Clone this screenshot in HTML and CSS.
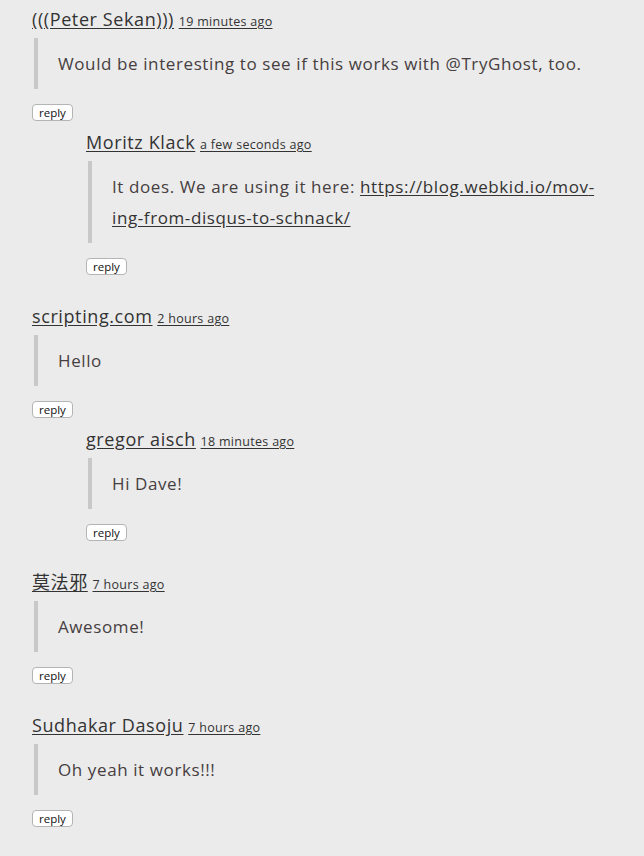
FILE: index.html
```html
<!DOCTYPE html>
<html lang="en">
<head>
<meta charset="utf-8">
<title>Comments</title>
<link rel="stylesheet" href="styles.css">
</head>
<body>
<ul class="comments">
  <li class="comment">
    <div class="meta"><a class="author" href="#">(((Peter Sekan)))</a> <a class="date" href="#">19 minutes ago</a></div>
    <blockquote class="body">Would be interesting to see if this works with @TryGhost, too.</blockquote>
    <button class="reply">reply</button>
    <ul class="replies">
      <li class="comment">
        <div class="meta"><a class="author" href="#">Moritz Klack</a> <a class="date" href="#">a few seconds ago</a></div>
        <blockquote class="body">It does. We are using it here: <a class="link" href="#">https://blog.webkid.io/mov&shy;ing-from-disqus-to-schnack/</a></blockquote>
        <button class="reply">reply</button>
      </li>
    </ul>
  </li>
  <li class="comment">
    <div class="meta"><a class="author" href="#">scripting.com</a> <a class="date" href="#">2 hours ago</a></div>
    <blockquote class="body">Hello</blockquote>
    <button class="reply">reply</button>
    <ul class="replies">
      <li class="comment">
        <div class="meta"><a class="author" href="#">gregor aisch</a> <a class="date" href="#">18 minutes ago</a></div>
        <blockquote class="body">Hi Dave!</blockquote>
        <button class="reply">reply</button>
      </li>
    </ul>
  </li>
  <li class="comment">
    <div class="meta"><a class="author" href="#">莫法邪</a> <a class="date" href="#">7 hours ago</a></div>
    <blockquote class="body">Awesome!</blockquote>
    <button class="reply">reply</button>
  </li>
  <li class="comment">
    <div class="meta"><a class="author" href="#">Sudhakar Dasoju</a> <a class="date" href="#">7 hours ago</a></div>
    <blockquote class="body">Oh yeah it works!!!</blockquote>
    <button class="reply">reply</button>
  </li>
</ul>
</body>
</html>
```
FILE: styles.css
```css
html, body {
  margin: 0;
  padding: 0;
  background: #ebebeb;
}
body {
  font-family: "Open Sans", "Noto Sans", "Noto Sans CJK SC", sans-serif;
  color: #333;
  padding: 6px 12px 0 32px;
}
.comments, .replies {
  list-style: none;
  margin: 0;
  padding: 0;
}
.comments > .comment {
  margin-bottom: 28px;
}
.replies {
  margin-top: 8px;
  padding-left: 54px;
}
.replies > .comment {
  margin-bottom: 3px;
}
.meta {
  font-size: 18px;
  line-height: 26px;
  height: 26px;
  white-space: nowrap;
}
.author, .date, .link {
  color: #333;
  text-decoration: underline;
  text-underline-offset: 2px;
}
.author {
  letter-spacing: 0.6px;
}
.date {
  font-size: 12.5px;
  letter-spacing: 0.3px;
}
.body {
  margin: 6px 0 0 2px;
  padding: 10px 20px;
  border-left: 4px solid #c8c8c8;
  font-size: 17px;
  line-height: 31px;
  letter-spacing: 0.6px;
  color: #463e3f;
  hyphens: manual;
}
.reply {
  display: block;
  margin-top: 15px;
  height: 17px;
  padding: 0 6px;
  font-family: "Open Sans", "Noto Sans", sans-serif;
  font-size: 11.5px;
  line-height: 15px;
  color: #111;
  background: #fff;
  border: 1px solid #b4b4b4;
  border-radius: 4px;
}
```
